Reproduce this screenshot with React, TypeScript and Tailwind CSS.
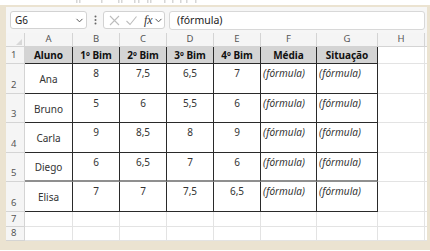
import React from "react";

const font = { fontFamily: '"Noto Sans", "Open Sans", sans-serif' };

const Chevron = ({ className = "" }: { className?: string }) => (
  <svg width="9" height="9" viewBox="0 0 10 10" className={className}>
    <path d="M2 3.5 L5 6.5 L8 3.5" fill="none" stroke="#555" strokeWidth="1.1" strokeLinecap="round" strokeLinejoin="round" />
  </svg>
);

type Row = { name: string; n: string[] };
const data: Row[] = [
  { name: "Ana", n: ["8", "7,5", "6,5", "7"] },
  { name: "Bruno", n: ["5", "6", "5,5", "6"] },
  { name: "Carla", n: ["9", "8,5", "8", "9"] },
  { name: "Diego", n: ["6", "6,5", "7", "6"] },
  { name: "Elisa", n: ["7", "7", "7,5", "6,5"] },
];

const headers = ["Aluno", "1º Bim", "2º Bim", "3º Bim", "4º Bim", "Média", "Situação"];
const letters = ["A", "B", "C", "D", "E", "F", "G", "H"];

const marks = [76, 79, 101, 118, 121, 134, 138, 147, 150, 164, 172, 180, 186, 195];

export default function App() {
  const cells: React.ReactNode[] = [];
  cells.push(
    <div key="corner" className="relative border-r border-b border-[#d4d4d4] bg-[#f5f5f5]">
      <svg width="6" height="6" viewBox="0 0 6 6" className="absolute right-[2px] bottom-[1px]">
        <path d="M6 0 L6 6 L0 6 Z" fill="#d8d8d8" />
      </svg>
    </div>
  );
  letters.forEach((l) =>
    cells.push(
      <div key={"h" + l} className="flex items-center justify-center border-r border-b border-[#d4d4d4] bg-[#f5f5f5] text-[9.5px] text-[#555]">
        {l}
      </div>
    )
  );
  cells.push(<div key="hI" className="border-b border-[#d4d4d4] bg-[#f5f5f5]" />);

  cells.push(
    <div key="r1" className="flex items-center pl-[5px] border-r border-b border-[#d4d4d4] bg-[#f5f5f5] text-[9.5px] text-[#555]">1</div>
  );
  headers.forEach((h) =>
    cells.push(
      <div key={"t" + h} className="flex items-center justify-center border-r border-b border-[#2a2a2a] bg-[#d4d4d4] text-[10px] font-bold text-[#111]">
        {h}
      </div>
    )
  );
  cells.push(<div key="r1H" className="border-r border-b border-[#e3e3e3]" />);
  cells.push(<div key="r1I" className="border-b border-[#e3e3e3]" />);

  data.forEach((r, i) => {
    const rowNum = i + 2;
    const thick = i === 3;
    const bb = thick ? "border-b-2 border-b-[#8f8f8f]" : "border-b border-b-[#2a2a2a]";
    cells.push(
      <div key={"rn" + rowNum} className="flex items-end pl-[5px] pb-[1px] border-r border-b border-[#d4d4d4] bg-[#f5f5f5] text-[9.5px] text-[#555]">
        {rowNum}
      </div>
    );
    cells.push(
      <div key={"nm" + rowNum} className={`flex items-center justify-center pt-[2px] border-r border-r-[#2a2a2a] ${bb} text-[10px] text-[#333]`}>
        {r.name}
      </div>
    );
    r.n.forEach((v, j) =>
      cells.push(
        <div key={"v" + rowNum + j} className={`flex justify-center pt-[3px] border-r border-r-[#2a2a2a] ${bb} text-[10px] leading-[12px] text-[#333]`}>
          {v}
        </div>
      )
    );
    [0, 1].forEach((k) =>
      cells.push(
        <div key={"f" + rowNum + k} className={`pl-[2px] pt-[3px] border-r border-r-[#2a2a2a] ${bb} text-[10px] leading-[12px] italic text-[#333]`}>
          (fórmula)
        </div>
      )
    );
    cells.push(<div key={"H" + rowNum} className="border-r border-b border-[#e3e3e3]" />);
    cells.push(<div key={"I" + rowNum} className="border-b border-[#e3e3e3]" />);
  });

  [7, 8].forEach((rn) => {
    cells.push(
      <div key={"rn" + rn} className="flex items-center pl-[5px] border-r border-b border-[#d4d4d4] bg-[#f5f5f5] text-[9.5px] text-[#555]">
        {rn}
      </div>
    );
    letters.forEach((l) => cells.push(<div key={l + rn} className="border-r border-b border-[#e3e3e3]" />));
    cells.push(<div key={"I" + rn} className="border-b border-[#e3e3e3]" />);
  });

  return (
    <div className="w-[430px] h-[251px] bg-white overflow-hidden" style={font}>
      <div className="h-[5px] bg-white">
        <svg width="430" height="5" viewBox="0 0 430 5">
          {marks.map((x) => (
            <rect key={x} x={x} y={0} width={1.5} height={3} fill="#d6d6d6" />
          ))}
        </svg>
      </div>
      <div className="bg-[#ebe3d1] pt-[2px] pl-[6px] pr-[3px] pb-[9px]">
        <div className="bg-white">
          <div className="flex h-[26px] items-start bg-[#f6f6f6] pt-[4px] pl-[4px]">
            <div className="flex h-[18px] w-[77px] items-center justify-between rounded-[3px] border border-[#d2d2d2] bg-white pl-[4px] pr-[2px] text-[10px] text-[#222]">
              <span>G6</span>
              <Chevron />
            </div>
            <div className="flex h-[18px] w-[16px] items-center justify-center">
              <svg width="3" height="10" viewBox="0 0 3 10">
                <circle cx="1.5" cy="1.5" r="1" fill="#666" />
                <circle cx="1.5" cy="5" r="1" fill="#666" />
                <circle cx="1.5" cy="8.5" r="1" fill="#666" />
              </svg>
            </div>
            <div className="flex h-[18px] w-[62px] items-center rounded-[3px] border border-[#d2d2d2] bg-white pl-[4px]">
              <svg width="13" height="13" viewBox="0 0 13 13">
                <path d="M2 2 L11 11 M11 2 L2 11" stroke="#bdbdbd" strokeWidth="1.1" />
              </svg>
              <svg width="13" height="13" viewBox="0 0 13 13" className="ml-[4px]">
                <path d="M1.5 7 L5 10.5 L11.5 2.5" fill="none" stroke="#bdbdbd" strokeWidth="1.1" />
              </svg>
              <span className="ml-[6px] text-[12px] italic leading-none text-[#333]" style={{ fontFamily: '"Liberation Serif", serif' }}>
                fx
              </span>
              <Chevron className="ml-[1px]" />
            </div>
            <div className="ml-[4px] flex h-[19px] flex-1 items-center rounded-[3px] border border-[#d8d8d8] bg-white pl-[7px] text-[10.5px] text-[#222]">
              (fórmula)
            </div>
            <div className="w-[2px]" />
          </div>
          <div className="grid grid-cols-[19px_48px_47px_47px_47px_47px_56px_61px_47px_1fr] grid-rows-[14px_17px_30px_29px_30px_29px_30px_15px_14px]">
            {cells}
          </div>
        </div>
      </div>
    </div>
  );
}
